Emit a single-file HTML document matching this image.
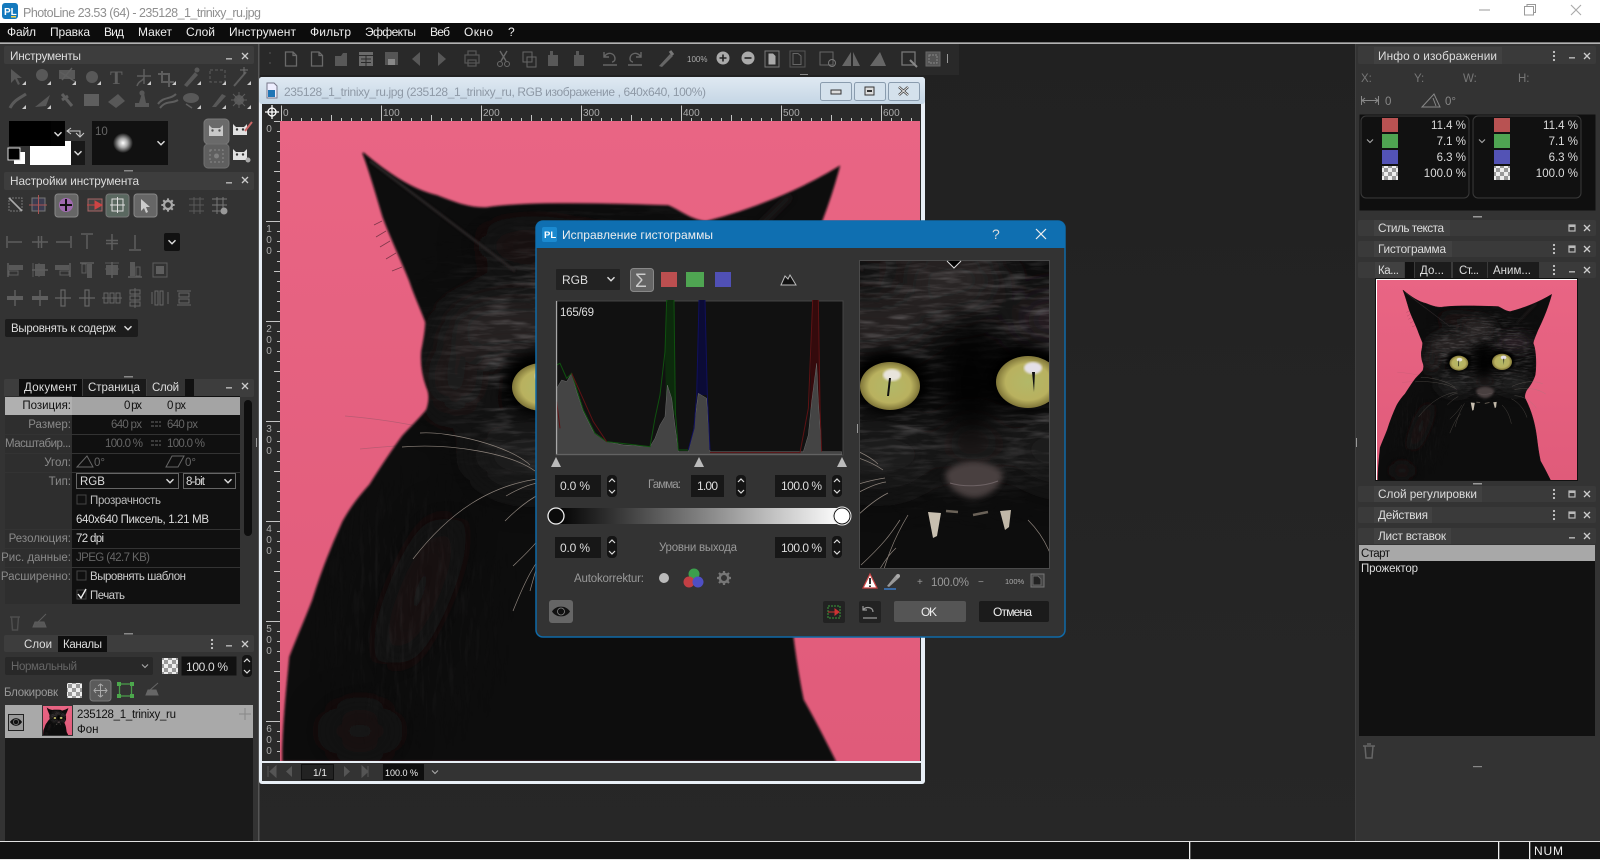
<!DOCTYPE html>
<html lang="ru"><head><meta charset="utf-8"><title>PhotoLine</title>
<style>
html,body{margin:0;padding:0;background:#282828;width:1600px;height:860px;overflow:hidden}
svg{display:block}
text{font-family:"Liberation Sans","Noto Sans CJK SC",sans-serif;font-size:11.5px;fill:#ddd}
.m text{font-size:12px;fill:#eee}
.h{font-size:11.800px;fill:#ddd}
.l{fill:#8a8a8a;text-anchor:end}
.d{fill:#666}
.k{fill:#111}
.g{fill:#999}
.i{fill:none;stroke:#5e5e5e;stroke-width:1.5}
.f{fill:#585858}
</style></head><body>
<svg xmlns="http://www.w3.org/2000/svg" width="1600" height="860" viewBox="0 0 1600 860">
<defs>
<pattern id="chk" width="8" height="8" patternUnits="userSpaceOnUse"><rect width="8" height="8" fill="#eee"/><rect width="4" height="4" fill="#999"/><rect x="4" y="4" width="4" height="4" fill="#999"/></pattern>
<linearGradient id="bg" x1="0" y1="0" x2="0" y2="1"><stop offset="0" stop-color="#212121"/><stop offset="1" stop-color="#272727"/></linearGradient>
<linearGradient id="win" x1="0" y1="0" x2="0" y2="1"><stop offset="0" stop-color="#dfe9f2"/><stop offset="1" stop-color="#c5d6e5"/></linearGradient>
<linearGradient id="gr"><stop offset="0" stop-color="#000"/><stop offset="1" stop-color="#fff"/></linearGradient>
<radialGradient id="eye"><stop offset="0" stop-color="#b2b868"/><stop offset=".7" stop-color="#b9b15f"/><stop offset="1" stop-color="#7f7538"/></radialGradient>
<radialGradient id="br"><stop offset="0" stop-color="#fff"/><stop offset=".45" stop-color="#aaa"/><stop offset="1" stop-color="#111"/></radialGradient>
<linearGradient id="pk" x1="0" y1="0" x2="0" y2="1"><stop offset="0" stop-color="#e96584"/><stop offset="1" stop-color="#e05b7a"/></linearGradient>
<filter id="b3" x="-30%" y="-30%" width="160%" height="160%"><feGaussianBlur stdDeviation="3"/></filter>
<filter id="b6" x="-40%" y="-40%" width="180%" height="180%"><feGaussianBlur stdDeviation="6"/></filter>
<filter id="b10" x="-60%" y="-60%" width="220%" height="220%"><feGaussianBlur stdDeviation="18"/></filter>
<filter id="b30" x="-40%" y="-40%" width="180%" height="180%"><feGaussianBlur stdDeviation="30"/></filter>
<filter id="b1" x="-5%" y="-5%" width="110%" height="110%"><feGaussianBlur stdDeviation="1"/></filter>
<filter id="fur" x="0" y="0" width="100%" height="100%"><feTurbulence type="fractalNoise" baseFrequency=".03 .2" numOctaves="3" seed="4"/><feColorMatrix type="matrix" values="0 0 0 0 .33  0 0 0 0 .31  0 0 0 0 .32  1.500 0 0 0 -.66"/></filter>
<filter id="fur2" x="0" y="0" width="100%" height="100%"><feTurbulence type="fractalNoise" baseFrequency=".2 .03" numOctaves="3" seed="9"/><feColorMatrix type="matrix" values="0 0 0 0 .28  0 0 0 0 .26  0 0 0 0 .27  1.500 0 0 0 -.66"/></filter>
<mask id="headm" maskUnits="userSpaceOnUse" x="0" y="0" width="640" height="640"><ellipse cx="340" cy="235" rx="175" ry="120" fill="#fff" filter="url(#b30)"/><ellipse cx="343" cy="275" rx="30" ry="75" fill="#000" filter="url(#b10)"/></mask>
<mask id="botm" maskUnits="userSpaceOnUse" x="0" y="0" width="640" height="640"><ellipse cx="130" cy="490" rx="70" ry="110" fill="#555" filter="url(#b30)"/></mask>
<clipPath id="sil"><path d="M83 32C110 55 135 70 157 75C175 82 190 88 207 87C240 82 300 82 388 85C400 90 412 100 426 101C470 90 520 70 559 46C550 80 535 120 515 160C505 185 500 195 500 203C510 225 510 280 506 304C500 325 485 345 479 352C472 365 472 375 474 379C490 410 505 450 512 510C515 535 518 555 523 579C535 600 545 620 555 640H3V629C4 590 8 560 10 536C18 515 25 500 33 479C42 450 52 425 63 401C72 385 80 375 90 364C102 345 112 330 123 315C132 305 140 298 147 289C150 280 150 272 147 266C143 255 141 242 142 230C144 220 146 210 146 201C140 185 135 175 130 160C120 135 110 115 103 95C97 75 90 50 83 32Z"/></clipPath>
<g id="cat">
<rect width="640" height="640" fill="url(#pk)"/>
<path d="M65 295C100 298 125 302 150 308M80 328C100 326 115 325 130 324" stroke="#b85a72" stroke-width=".8" fill="none"/>
<path d="M83 32C110 55 135 70 157 75C175 82 190 88 207 87C240 82 300 82 388 85C400 90 412 100 426 101C470 90 520 70 559 46C550 80 535 120 515 160C505 185 500 195 500 203C510 225 510 280 506 304C500 325 485 345 479 352C472 365 472 375 474 379C490 410 505 450 512 510C515 535 518 555 523 579C535 600 545 620 555 640H3V629C4 590 8 560 10 536C18 515 25 500 33 479C42 450 52 425 63 401C72 385 80 375 90 364C102 345 112 330 123 315C132 305 140 298 147 289C150 280 150 272 147 266C143 255 141 242 142 230C144 220 146 210 146 201C140 185 135 175 130 160C120 135 110 115 103 95C97 75 90 50 83 32Z" fill="#090707" stroke="#100c0c" stroke-width="1.500" filter="url(#b1)"/>
<path d="M102 100L94 104M106 110L96 116M110 120L100 126M116 132L106 138M122 146L112 150" stroke="#3a1a26" stroke-width=".8" opacity=".6"/>
<g clip-path="url(#sil)">
<g filter="url(#b10)">
<ellipse cx="325" cy="160" rx="50" ry="38" fill="#2b2627"/>
<ellipse cx="235" cy="205" rx="70" ry="28" fill="#2b2627"/>
<ellipse cx="440" cy="200" rx="60" ry="26" fill="#292425"/>
<ellipse cx="250" cy="335" rx="60" ry="35" fill="#1f1b1c"/>
<ellipse cx="440" cy="330" rx="60" ry="35" fill="#1f1b1c"/>
<ellipse cx="345" cy="322" rx="26" ry="26" fill="#2a2526"/>
<ellipse cx="175" cy="258" rx="28" ry="38" fill="#221e1f"/>
<ellipse cx="255" cy="125" rx="60" ry="18" fill="#1c1819"/>
<ellipse cx="140" cy="470" rx="20" ry="80" fill="#1c1819" transform="rotate(22 140 470)"/>
<ellipse cx="80" cy="610" rx="35" ry="24" fill="#1c1819"/>
</g>
<rect width="640" height="640" filter="url(#fur)" mask="url(#headm)" opacity=".6"/>
<rect width="640" height="640" filter="url(#fur2)" mask="url(#botm)" opacity=".45"/>
<path d="M90 40L235 150" stroke="#2a2526" stroke-width="2.500" filter="url(#b1)"/>
<path d="M510 75L445 140" stroke="#221d1e" stroke-width="5" filter="url(#b3)"/>
<ellipse cx="342" cy="262" rx="24" ry="62" fill="#020101" filter="url(#b10)"/>
<ellipse cx="262" cy="262" rx="40" ry="32" fill="#000" filter="url(#b6)"/>
<ellipse cx="400" cy="258" rx="42" ry="34" fill="#000" filter="url(#b6)"/>
</g>
<ellipse cx="262" cy="266" rx="30" ry="24" fill="url(#eye)"/>
<ellipse cx="400" cy="262" rx="32" ry="26" fill="url(#eye)"/>
<ellipse cx="264" cy="255" rx="9" ry="6" fill="#e8e4dc" filter="url(#b1)"/>
<ellipse cx="405" cy="248" rx="9" ry="6" fill="#e4e0e8" filter="url(#b1)"/>
<path d="M261 258L263 258 261 276 259 276Z" fill="#111"/>
<path d="M404 252L407 252 406 272Z" fill="#111"/>
<path d="M318 352C330 338 362 338 374 352 378 362 362 378 346 378 330 378 314 362 318 352Z" fill="#4a3f41" filter="url(#b3)"/>
<path d="M322 363C335 367 355 367 370 361" stroke="#6d6264" stroke-width="1" fill="none"/>
<path d="M300 392L313 393 309 416 305 418Z" fill="#c9c0b0"/>
<path d="M372 391L383 390 381 407 377 410Z" fill="#c1b8a8"/>
<path d="M318 391L330 392M345 395L360 392" stroke="#6a6258" stroke-width="2.500"/>
<g stroke="#8f857d" stroke-width=".7" fill="none">
<path d="M140 312C170 310 230 325 250 344M122 326C170 322 230 332 255 350M133 438C170 390 210 365 257 358M226 375C240 367 250 363 258 362M225 400C240 385 250 378 260 373M233 490C245 460 255 440 268 428"/>
<path d="M432 340C470 325 500 320 530 332M440 350C480 345 510 345 540 365M440 370C470 372 490 385 510 410M430 380C450 390 470 410 480 440"/>
<path d="M233 445C260 420 265 410 272 400M250 470C258 440 265 420 280 395M400 400C420 420 425 440 430 460"/>
</g>
</g>
<g id="dn"><path d="M-3.500 -1.800L0 1.800 3.500 -1.800" fill="none" stroke="#ddd" stroke-width="1.400"/></g>
<g id="dnw"><path d="M-3 -1.500L0 1.500 3 -1.500" fill="none" stroke="#aaa" stroke-width="1.100"/></g>
<g id="mi"><rect x="-3" y="0" width="6" height="1.600" fill="#aaa"/></g>
<g id="cl"><path d="M-3 -3L3 3M3 -3L-3 3" stroke="#ccc" stroke-width="1.300"/></g>
<g id="mx"><rect x="-3" y="-3" width="6" height="6" fill="none" stroke="#bbb" stroke-width="1.200"/><rect x="-3" y="-3" width="6" height="2" fill="#bbb"/></g>
<g id="dots"><circle cy="-4" r="1.100" fill="#ccc"/><circle r="1.100" fill="#ccc"/><circle cy="4" r="1.100" fill="#ccc"/></g>
<g id="tri"><path d="M0 4L4 0V4Z" fill="#c9c9c9"/></g>
<g id="spin"><rect x="-5" y="-11" width="10" height="22" rx="4" fill="#141414"/><path d="M-3 -4L0 -7 3 -4M-3 4L0 7 3 4" fill="none" stroke="#ddd" stroke-width="1.200"/></g>
<g id="gear"><circle r="4.200" fill="none" stroke="#777" stroke-width="2.400"/><path d="M0 -7V-4M0 4V7M-7 0H-4M4 0H7M-5 -5L-3 -3M3 3L5 5M5 -5L3 -3M-3 3L-5 5" stroke="#777" stroke-width="2.200"/></g>
<g id="a1"><path d="M-8 -6V6M-7 0H7" class="i"/></g>
<g id="a2"><path d="M-8 0H8M-1.500 -6V6M1.500 -6V6" class="i"/></g>
<g id="a3"><path d="M8 -6V6M-7 0H7" class="i"/></g>
<g id="b1i"><path d="M-7 -7V7" class="i"/><rect x="-6" y="-5" width="14" height="5" class="f"/><rect x="-6" y="1" width="9" height="4" fill="none" stroke="#5e5e5e"/></g>
<g id="b2i"><path d="M-7 -7V7M-1 -7V7" class="i" opacity=".6"/><rect x="-5" y="-6" width="10" height="12" class="f"/><path d="M-8 0H8" class="i"/></g>
<g id="c1i"><path d="M0 -8V8" class="i"/><rect x="-8" y="-2" width="16" height="4" fill="#5e5e5e"/></g>
<g id="c2i"><path d="M-8 0H8" class="i"/><rect x="-2" y="-8" width="4" height="16" fill="none" stroke="#666" stroke-width="1.200"/></g>
<g id="doc"><path d="M-5.500 -7H2L5.500 -3.500V7H-5.500ZM2 -7V-3.500H5.500" fill="none" stroke="#6a6a6a" stroke-width="1.300"/></g>
<g id="catf"><path d="M-7 -6L-4 -3H4L7 -6V5H-7Z"/></g>
</defs>

<!-- base -->
<rect width="1600" height="860" fill="#333"/>
<rect x="259" y="44" width="1097" height="797" fill="url(#bg)"/>
<rect x="259" y="44" width="700" height="31" fill="#292929"/>
<rect x="258" y="44" width="1.500" height="797" fill="#555"/>
<rect x="1355" y="44" width="1" height="797" fill="#3e3e3e"/>

<!-- title bar -->
<rect width="1600" height="23" fill="#fff"/>
<rect x="2" y="3" width="16" height="16" rx="3" fill="#1479bd"/>
<text x="4" y="15" style="font-size:10px;font-weight:bold;fill:#fff">PL</text>
<rect x="11" y="16" width="5" height="1.500" fill="#f3d34a"/>
<text x="23" y="17" textLength="238" style="font-size:12.500px;fill:#8f8f8f">PhotoLine 23.53 (64) - 235128_1_trinixy_ru.jpg</text>
<path d="M1479 10H1490" stroke="#999" stroke-width="1"/>
<path d="M1524.500 6.500h9v8.500h-9zM1527 6.500V4.500h8.500v8h-2" fill="none" stroke="#999"/>
<path d="M1571 5L1581 15M1581 5L1571 15" stroke="#aaa" stroke-width="1.100"/>

<!-- menu -->
<rect y="23" width="1600" height="20" fill="#0c0c0c"/>
<rect y="42.500" width="1600" height="1.200" fill="#e8e8e8"/>
<g class="m">
<text x="7" y="36" textLength="29">Файл</text><text x="50" y="36" textLength="40">Правка</text><text x="104" y="36" textLength="20">Вид</text><text x="138" y="36" textLength="34">Макет</text><text x="186" y="36" textLength="29">Слой</text><text x="229" y="36" textLength="67">Инструмент</text><text x="310" y="36" textLength="41">Фильтр</text><text x="365" y="36" textLength="51">Эффекты</text><text x="430" y="36" textLength="20">Веб</text><text x="464" y="36" textLength="29">Окно</text><text x="508" y="36">?</text>
</g>

<!-- Left: Tools -->
<rect x="4" y="46" width="250" height="18" rx="2" fill="#3d3d3d"/>
<text x="10" y="60" class="h" textLength="71">Инструменты</text>
<use href="#mi" x="229" y="58"/><use href="#cl" x="245" y="56"/>
<g>
<path d="M11 69V83L15 79 18 85 20 84 17 78 22 78Z" class="f"/>
<circle cx="42" cy="75" r="6" class="f"/>
<path d="M59 70H75V79H59Z" class="f"/><path d="M60 72L76 82M62 80L72 68" class="i"/>
<circle cx="92" cy="77" r="6" class="f"/>
<text x="110" y="84" style="font-family:'Liberation Serif',serif;font-size:19px;font-weight:bold;fill:#5e5e5e">T</text>
<path d="M144 69V84M137 76H151M137 86C139 80 142 82 144 78" class="i"/>
<path d="M162 71V82H174M158 74H169V87" class="i" style="stroke-width:2"/>
<path d="M184 85L195 72 198 75 187 87Z" class="f"/><circle cx="197" cy="70" r="2.500" class="f"/>
<rect x="210" y="70" width="15" height="12" fill="none" stroke="#5e5e5e" stroke-dasharray="3 2"/>
<path d="M234 86L246 72" stroke="#5e5e5e" stroke-width="2"/><path d="M244 67V74M240 70H248" stroke="#707070"/>
<use href="#tri" x="22" y="81"/><use href="#tri" x="47" y="81"/><use href="#tri" x="72" y="81"/><use href="#tri" x="97" y="81"/><use href="#tri" x="147" y="81"/><use href="#tri" x="172" y="81"/><use href="#tri" x="197" y="81"/><use href="#tri" x="222" y="81"/><use href="#tri" x="247" y="81"/>
<path d="M10 108C14 100 20 98 26 94" stroke="#5a5a5a" stroke-width="3" fill="none"/>
<path d="M35 107L50 95 46 106Z" class="f"/>
<path d="M62 94L72 106M62 100L68 96" stroke="#5e5e5e" stroke-width="3"/>
<rect x="84" y="94" width="15" height="12" fill="#5e5e5e"/>
<path d="M108 102L118 94 125 101 116 108Z" class="f"/>
<path d="M135 107H149V103H135ZM139 103L142 93H144L146 103" class="f"/><circle cx="142" cy="93" r="2.600" class="f"/>
<path d="M158 104C164 96 170 100 176 94M160 108C166 100 172 104 178 100" class="i" style="stroke-width:2"/>
<ellipse cx="191" cy="98" rx="8" ry="5" class="f"/><path d="M186 104L192 108" class="i"/>
<path d="M212 107L222 94 226 96 216 107Z" class="f"/>
<circle cx="239" cy="100" r="5" class="f"/><path d="M239 92V108M231 100H247M233 94L245 106M245 94L233 106" class="i" style="stroke-width:1"/>
<use href="#tri" x="22" y="105"/><use href="#tri" x="47" y="105"/><use href="#tri" x="197" y="105"/><use href="#tri" x="222" y="105"/><use href="#tri" x="247" y="105"/>
</g>
<!-- colours -->
<rect x="30" y="141" width="55" height="24" fill="#181818"/>
<rect x="30" y="141" width="41" height="24" fill="#fff"/>
<rect x="9" y="121" width="56" height="25" fill="#030303"/>
<rect x="9" y="121" width="42" height="25" fill="#000"/>
<use href="#dn" x="58" y="134"/><use href="#dn" x="78" y="153"/>
<path d="M67 131H80V137M76 133L80 137 84 133M71 128L67 131 71 134" fill="none" stroke="#ccc" stroke-width="1"/>
<rect x="14" y="152" width="11" height="12" fill="#fff"/><rect x="8" y="148" width="12" height="12" fill="#000" stroke="#ddd"/>
<rect x="92" y="121" width="76" height="44" fill="#111"/>
<text x="95" y="135" class="d">10</text>
<circle cx="123" cy="143" r="10" fill="url(#br)"/>
<use href="#dn" x="161" y="143"/>
<rect x="204" y="119" width="25" height="25" rx="4" fill="#6a6a6a" stroke="#7a7a7a"/>
<rect x="204" y="144" width="25" height="24" rx="4" fill="#5f5f5f" stroke="#707070"/>
<use href="#catf" x="216" y="131" fill="#c8c8c8"/><circle cx="212.500" cy="130.500" r="1.200" fill="#555"/><circle cx="219.500" cy="130.500" r="1.200" fill="#555"/>
<rect x="210" y="150" width="13" height="12" fill="none" stroke="#888" stroke-dasharray="2 2"/><circle cx="216.500" cy="156" r="2.500" fill="#808080"/>
<use href="#catf" x="240" y="130" fill="#e0e0e0"/><circle cx="237" cy="129.500" r="1.200" fill="#333"/><circle cx="243" cy="129.500" r="1.200" fill="#333"/><path d="M245 131L252 122" stroke="#c66" stroke-width="2"/>
<use href="#catf" x="240" y="155" fill="#e0e0e0"/><circle cx="237" cy="154.500" r="1.200" fill="#333"/><circle cx="243" cy="154.500" r="1.200" fill="#333"/><circle cx="248" cy="160" r="2.500" fill="#aaa"/>
<rect x="124" y="170" width="9" height="1.500" fill="#888"/>

<!-- Tool settings -->
<rect x="4" y="172" width="250" height="18" rx="2" fill="#3d3d3d"/>
<text x="10" y="185" class="h" textLength="129">Настройки инструмента</text>
<use href="#mi" x="229" y="182"/><use href="#cl" x="245" y="180"/>
<rect x="9" y="198" width="13" height="13" fill="none" stroke="#777" stroke-dasharray="2 1"/><path d="M9 198L22 211" stroke="#aaa" stroke-width="1.600"/>
<rect x="32" y="198" width="13" height="13" fill="#3c3c50" stroke="#777"/><path d="M38.500 195V214M29 205H47" stroke="#a55" stroke-width="1"/>
<rect x="55" y="194" width="23" height="23" rx="3" fill="#666" stroke="#888"/><circle cx="66" cy="205" r="7" fill="#a06ab0"/><path d="M66 199V211M60 205H72" stroke="#111" stroke-width="2"/>
<rect x="88" y="199" width="14" height="12" fill="#444" stroke="#a66"/><path d="M87 205H99M95 201L102 205 95 209Z" fill="#c44" stroke="#c44"/>
<rect x="106" y="194" width="23" height="23" rx="3" fill="#5a6860" stroke="#777"/><rect x="112" y="199" width="11" height="12" fill="none" stroke="#ddd"/><path d="M117.500 197V213M110 205H125" stroke="#ddd"/>
<rect x="134" y="194" width="23" height="23" rx="3" fill="#666" stroke="#888"/><path d="M141 199V211L144 208 146 213 148 212 146 207 150 207Z" fill="#ccc"/>
<g transform="translate(168 205) scale(.95)"><circle r="4.200" fill="none" stroke="#a8a8a8" stroke-width="2.400"/><path d="M0 -7V-4M0 4V7M-7 0H-4M4 0H7M-5 -5L-3 -3M3 3L5 5M5 -5L3 -3M-3 3L-5 5" stroke="#a8a8a8" stroke-width="2.200"/></g>
<path d="M189 199H204M189 205H204M189 211H204M194 197V214M200 197V214" stroke="#5a5a5a"/>
<path d="M212 199H227M212 205H227M212 211H227M217 197V214M223 197V214" stroke="#777"/><circle cx="224" cy="211" r="3.500" fill="#999"/>
<use href="#a1" x="15" y="242"/><use href="#a2" x="40" y="242"/><use href="#a3" x="63" y="242"/>
<use href="#a1" transform="translate(87 242) rotate(90)"/><use href="#a2" transform="translate(112 242) rotate(90)"/><use href="#a3" transform="translate(135 242) rotate(90)"/>
<rect x="164" y="233" width="16" height="18" rx="2" fill="#111"/><use href="#dn" x="172" y="242"/>
<use href="#b1i" x="15" y="270"/><use href="#b2i" x="40" y="270"/><use href="#b1i" transform="translate(63 270) scale(-1 1)"/><use href="#b1i" transform="translate(87 270) rotate(90)"/><use href="#b2i" transform="translate(112 270) rotate(90)"/><use href="#b1i" transform="translate(135 270) rotate(-90)"/>
<rect x="153" y="263" width="14" height="14" fill="none" stroke="#5e5e5e"/><rect x="156" y="266" width="8" height="8" fill="#5e5e5e"/>
<use href="#c1i" x="15" y="298"/><use href="#c1i" x="40" y="298"/><use href="#c2i" x="63" y="298"/><use href="#c2i" x="87" y="298"/>
<path d="M104 293h4v10h-4zM110 293h4v10h-4zM116 293h4v10h-4zM102 298h20" fill="none" stroke="#666"/>
<path d="M130 290h10v4h-10zM130 296h10v4h-10zM130 302h10v4h-10zM135 288v20" fill="none" stroke="#666"/>
<path d="M152 292v12M168 292v12M155 291h3v14h-3zM160 291h3v14h-3z" fill="none" stroke="#666"/>
<path d="M177 291h14M177 305h14M179 293h10v4h-10zM179 299h10v4h-10z" fill="none" stroke="#666"/>
<rect x="5" y="319" width="133" height="18" rx="2" fill="#1c1c1c"/>
<text x="11" y="332" textLength="105">Выровнять к содерж</text>
<use href="#dn" x="128" y="328"/>

<!-- Properties -->
<rect x="124" y="376" width="9" height="1.500" fill="#888"/>
<rect x="4" y="379" width="250" height="18" rx="2" fill="#3d3d3d"/>
<rect x="19" y="379" width="63" height="17" fill="#0e0e0e"/><rect x="83" y="379" width="63" height="17" fill="#1a1a1a"/><rect x="147" y="379" width="38" height="17" fill="#333"/><rect x="185" y="379" width="9" height="17" fill="#111"/>
<text x="24" y="391" textLength="53">Документ</text><text x="88" y="391" textLength="52">Страница</text><text x="152" y="391" textLength="27">Слой</text>
<use href="#mi" x="229" y="387"/><use href="#cl" x="245" y="386"/>
<rect x="5" y="396" width="235" height="208" fill="#101010"/>
<rect x="5" y="396" width="67" height="208" fill="#2e2e2e"/>
<rect x="5" y="397" width="67" height="18" fill="#b0b0b0"/><rect x="72" y="397" width="168" height="18" fill="#a4a4a4"/>
<path d="M5 434.500H240M5 453.500H240M5 472.500H240M5 529.500H240M5 548.500H240M5 567.500H240" stroke="#333"/>
<text x="71" y="409" class="k" style="text-anchor:end">Позиция:</text>
<text x="124" y="409" class="k" textLength="18">0 px</text><text x="167" y="409" class="k" textLength="19">0 px</text>
<text x="71" y="428" class="l">Размер:</text><text x="111" y="428" class="d" textLength="31">640 px</text><text x="167" y="428" class="d" textLength="31">640 px</text>
<path d="M151 422H161M151 426H161" stroke="#666" stroke-dasharray="3 1"/>
<text x="5" y="447" class="g" style="fill:#8a8a8a" textLength="66">Масштабир...</text><text x="105" y="447" class="d" textLength="38">100.0 %</text><text x="167" y="447" class="d" textLength="38">100.0 %</text>
<path d="M151 441H161M151 445H161" stroke="#666" stroke-dasharray="3 1"/>
<text x="71" y="466" class="l">Угол:</text><path d="M77 467L87 456 93 467Z" fill="none" stroke="#666"/><text x="94" y="466" class="d">0°</text><path d="M166 467L172 456H184L178 467Z" fill="none" stroke="#666"/><text x="185" y="466" class="d">0°</text>
<text x="71" y="485" class="l">Тип:</text>
<rect x="76.500" y="473.500" width="102" height="15" fill="#111" stroke="#666"/><text x="80" y="485">RGB</text><use href="#dn" x="170" y="481"/>
<rect x="183.500" y="473.500" width="52" height="15" fill="#111" stroke="#666"/><text x="186" y="485" textLength="19">8-bit</text><use href="#dn" x="228" y="481"/>
<rect x="77" y="495" width="9" height="9" fill="none" stroke="#444"/><text x="90" y="504" style="fill:#bbb" textLength="71">Прозрачность</text>
<text x="76" y="523" textLength="133">640x640 Пиксель, 1.21 MB</text>
<text x="71" y="542" class="l">Резолюция:</text><text x="76" y="542" textLength="28">72 dpi</text>
<text x="71" y="561" class="l">Рис. данные:</text><text x="76" y="561" class="d" textLength="74">JPEG (42.7 KB)</text>
<text x="71" y="580" class="l">Расширенно:</text><rect x="77" y="571" width="9" height="9" fill="none" stroke="#444"/><text x="90" y="580" style="fill:#ccc" textLength="96">Выровнять шаблон</text>
<rect x="77" y="590" width="9" height="9" fill="none" stroke="#444"/><path d="M78 594L81 598 86 589" stroke="#eee" stroke-width="1.400" fill="none"/><text x="90" y="599" style="fill:#ccc" textLength="35">Печать</text>
<rect x="244" y="400" width="8" height="136" rx="4" fill="#0e0e0e"/>
<rect x="256" y="438" width="1" height="9" fill="#999"/>
<path d="M10 617H20M11.500 617L12.500 630H17.500L18.500 617" fill="none" stroke="#4e4e4e" stroke-width="1.500"/>
<path d="M33 627H46L44 622H35ZM38 622L46 614" class="f" stroke="#5c5c5c"/>
<rect x="124" y="633" width="9" height="1.500" fill="#888"/>

<!-- Layers -->
<rect x="4" y="635" width="250" height="17" rx="2" fill="#3d3d3d"/>
<rect x="58" y="636" width="49" height="16" fill="#0e0e0e"/>
<text x="24" y="648" textLength="28">Слои</text><text x="63" y="648" textLength="39">Каналы</text>
<use href="#dots" x="212" y="644"/><use href="#mi" x="229" y="645"/><use href="#cl" x="245" y="644"/>
<rect x="5" y="657" width="148" height="18" rx="2" fill="#282828"/>
<text x="11" y="670" class="d" textLength="66">Нормальный</text><use href="#dnw" x="145" y="666"/>
<rect x="162" y="658" width="16" height="16" fill="url(#chk)"/>
<rect x="181" y="656" width="56" height="20" fill="#111" stroke="#333"/><text x="186" y="671" textLength="42" style="font-size:12px">100.0 %</text>
<use href="#spin" x="247" y="666"/>
<text x="4" y="696" class="g" textLength="54">Блокировк</text>
<rect x="67" y="683" width="15" height="15" fill="url(#chk)"/>
<rect x="90" y="680" width="21" height="21" rx="3" fill="#5b5b5b" stroke="#7a7a7a"/><path d="M100.500 684V697M94 690.500H107M98 686L100.500 684 103 686M98 695L100.500 697 103 695M96 688L94 690.500 96 693M105 688L107 690.500 105 693" fill="none" stroke="#aaa"/>
<rect x="119.500" y="684" width="12" height="12" fill="none" stroke="#4a9a4a" stroke-width="1.300"/>
<rect x="117" y="682" width="4" height="4" fill="#4ca84c"/><rect x="130" y="682" width="4" height="4" fill="#4ca84c"/><rect x="117" y="694" width="4" height="4" fill="#4ca84c"/><rect x="130" y="694" width="4" height="4" fill="#4ca84c"/>
<path d="M146 695H158L156 690H148ZM150 690L158 683" fill="#666" stroke="#666"/>
<rect x="5" y="705" width="248" height="33" fill="#a9a9a9"/>
<rect x="5" y="738" width="248" height="103" fill="#1a1a1a"/>
<rect x="8.500" y="714.500" width="15" height="16" fill="#9a9a9a" stroke="#222"/>
<path d="M10 722C13 717 19 717 22 722 19 727 13 727 10 722Z" fill="#111"/><circle cx="16" cy="722" r="2.600" fill="#111" stroke="#888" stroke-width=".7"/>
<rect x="42" y="705" width="31" height="31" fill="#333"/>
<svg x="43" y="706" width="29" height="29" viewBox="0 0 640 640"><use href="#cat"/></svg>
<text x="77" y="718" class="k" textLength="99">235128_1_trinixy_ru</text>
<text x="77" y="733" class="k">Фон</text>
<path d="M245 708V720M239 714H251" stroke="#888"/>

<!-- toolbar -->
<g>
<path d="M270 52V54M270 62V64" stroke="#555"/>
<use href="#doc" x="291" y="59"/><use href="#doc" x="317" y="59"/>
<path d="M335 66V56H341L343 53H347V66Z" class="f"/>
<rect x="359" y="52" width="14" height="14" fill="#6a6a6a"/><path d="M359 55.500H373M361 59H371M361 62.500H371M366 56V66" stroke="#2a2a2a"/>
<rect x="385" y="52" width="13" height="13" fill="#555"/><rect x="388" y="59" width="7" height="6" fill="#888"/>
<path d="M420 52L412 59 420 66Z" class="f"/><path d="M438 52L446 59 438 66Z" class="f"/>
<path d="M465 55H479V63H465ZM468 55V51H476V55M468 60H476V66H468Z" fill="none" stroke="#555" stroke-width="1.300"/>
<path d="M500 51L506 61M507 51L501 61" stroke="#6a6a6a" stroke-width="1.400"/><circle cx="500" cy="64" r="2.500" fill="none" stroke="#6a6a6a"/><circle cx="507" cy="64" r="2.500" fill="none" stroke="#6a6a6a"/>
<rect x="523" y="52" width="9" height="10" fill="none" stroke="#666"/><rect x="527" y="57" width="9" height="10" fill="none" stroke="#666"/>
<path d="M548 55H558V66H548Z" class="f"/><rect x="550" y="51" width="3" height="4" class="f"/>
<path d="M574 55H584V66H574Z" class="f"/><rect x="576" y="51" width="3" height="4" class="f"/>
<path d="M604 57C608 51 615 53 615 59 615 61 613 62 612 62M604 52V57H609M603 65H617" fill="none" stroke="#666" stroke-width="1.400"/>
<path d="M641 57C637 51 630 53 630 59 630 61 632 62 633 62M641 52V57H636M628 65H642" fill="none" stroke="#666" stroke-width="1.400"/>
<path d="M659 66L670 54 673 56 662 67Z" fill="#666"/><path d="M670 51L673 55" stroke="#777" stroke-width="3"/>
<text x="687" y="62" style="font-size:8px;fill:#aaa">100%</text>
<circle cx="723" cy="58" r="6.500" fill="#aaa"/><path d="M723 54.500V61.500M719.500 58H726.500" stroke="#222" stroke-width="1.600"/>
<circle cx="748" cy="58" r="6.500" fill="#aaa"/><path d="M744.500 58H751.500" stroke="#222" stroke-width="1.600"/>
<rect x="765" y="51" width="14" height="16" fill="none" stroke="#777"/><path d="M768.500 53.500H773L775.500 56V64.500H768.500Z" fill="#aaa"/>
<rect x="790" y="51" width="15" height="16" fill="none" stroke="#555"/><path d="M793 53.500H798L801 56V64.500H793Z" fill="none" stroke="#666"/>
<rect x="820" y="52" width="13" height="13" fill="none" stroke="#666"/><circle cx="832" cy="63" r="3.500" fill="none" stroke="#777"/>
<path d="M842 66L851 52V66ZM853 52L860 66H853Z" fill="#666"/>
<path d="M870 66L880 52 886 66ZM876 66L880 58 883 66" fill="#666"/>
<rect x="902" y="52" width="13" height="13" fill="none" stroke="#777" stroke-width="1.300"/><path d="M910 60L917 67" stroke="#888" stroke-width="2"/>
<rect x="926" y="52" width="14" height="14" fill="#555" stroke="#666"/><path d="M929 55H937V63H929Z" fill="none" stroke="#888" stroke-dasharray="2 1"/>
<rect x="947" y="54" width="1" height="9" fill="#999"/>
<rect x="800" y="74" width="8" height="1" fill="#888"/>
</g>

<!-- document window -->
<rect x="259" y="77" width="666" height="707" rx="3" fill="#e8eff6"/>
<rect x="259" y="77" width="666" height="27" rx="3" fill="url(#win)"/>
<path d="M267 83H274L277 86V98H267Z" fill="#eef" stroke="#778"/><rect x="268" y="90" width="7" height="7" fill="#1f75b5"/>
<text x="284" y="96" textLength="422" style="fill:#8e99a6;font-size:12px">235128_1_trinixy_ru.jpg (235128_1_trinixy_ru, RGB изображение , 640x640, 100%)</text>
<g fill="#d4e1ec" stroke="#8a9cae"><rect x="820.500" y="82.500" width="31" height="18" rx="2"/><rect x="854.500" y="82.500" width="31" height="18" rx="2"/><rect x="888.500" y="82.500" width="31" height="18" rx="2"/></g>
<rect x="831" y="90" width="10" height="4" fill="#ddd" stroke="#333" stroke-width="1"/>
<rect x="865" y="87" width="9" height="8" fill="#ddd" stroke="#333"/><rect x="867" y="90" width="5" height="2" fill="#333"/>
<path d="M899 87L908 95M908 87L899 95" stroke="#333" stroke-width="2.400"/><path d="M899 87L908 95M908 87L899 95" stroke="#eee" stroke-width=".9"/>
<rect x="262" y="104" width="659" height="657" fill="#2a2a2a"/>
<svg x="280" y="121" width="640" height="640" viewBox="0 0 640 640"><use href="#cat"/></svg>
<!-- rulers -->
<g stroke="#c4c4c4" fill="none">
<path d="M281 119.500H920" stroke-width="3" stroke-dasharray="1 9"/>
<path d="M281 118H920" stroke-width="6" stroke-dasharray="1 49"/>
<path d="M281 113H920" stroke-width="15" stroke-dasharray="1 99"/>
<path d="M278.500 121V761" stroke-width="3" stroke-dasharray="1 9"/>
<path d="M277 121V761" stroke-width="6" stroke-dasharray="1 49"/>
<path d="M273 221V761" stroke-width="14" stroke-dasharray="1 99"/>
</g>
<g>
<text x="283" y="116" style="font-size:10px;fill:#aaa">0</text><text x="383" y="116" style="font-size:10px;fill:#aaa">100</text><text x="483" y="116" style="font-size:10px;fill:#aaa">200</text><text x="583" y="116" style="font-size:10px;fill:#aaa">300</text><text x="683" y="116" style="font-size:10px;fill:#aaa">400</text><text x="783" y="116" style="font-size:10px;fill:#aaa">500</text><text x="883" y="116" style="font-size:10px;fill:#aaa">600</text>
</g>
<g>
<text x="269" y="132" style="font-size:10px;fill:#aaa" text-anchor="middle">0</text>
<text x="269" y="232" style="font-size:10px;fill:#aaa" text-anchor="middle">1</text><text x="269" y="243" style="font-size:10px;fill:#aaa" text-anchor="middle">0</text><text x="269" y="254" style="font-size:10px;fill:#aaa" text-anchor="middle">0</text>
<text x="269" y="332" style="font-size:10px;fill:#aaa" text-anchor="middle">2</text><text x="269" y="343" style="font-size:10px;fill:#aaa" text-anchor="middle">0</text><text x="269" y="354" style="font-size:10px;fill:#aaa" text-anchor="middle">0</text>
<text x="269" y="432" style="font-size:10px;fill:#aaa" text-anchor="middle">3</text><text x="269" y="443" style="font-size:10px;fill:#aaa" text-anchor="middle">0</text><text x="269" y="454" style="font-size:10px;fill:#aaa" text-anchor="middle">0</text>
<text x="269" y="532" style="font-size:10px;fill:#aaa" text-anchor="middle">4</text><text x="269" y="543" style="font-size:10px;fill:#aaa" text-anchor="middle">0</text><text x="269" y="554" style="font-size:10px;fill:#aaa" text-anchor="middle">0</text>
<text x="269" y="632" style="font-size:10px;fill:#aaa" text-anchor="middle">5</text><text x="269" y="643" style="font-size:10px;fill:#aaa" text-anchor="middle">0</text><text x="269" y="654" style="font-size:10px;fill:#aaa" text-anchor="middle">0</text>
<text x="269" y="732" style="font-size:10px;fill:#aaa" text-anchor="middle">6</text><text x="269" y="743" style="font-size:10px;fill:#aaa" text-anchor="middle">0</text><text x="269" y="754" style="font-size:10px;fill:#aaa" text-anchor="middle">0</text>
</g>
<circle cx="272" cy="112" r="4" fill="none" stroke="#fff" stroke-width="1.300"/><path d="M272 105V119M265 112H279" stroke="#fff" stroke-width="1.300"/>
<!-- doc status strip -->
<rect x="262" y="763" width="659" height="18" fill="#333"/>
<path d="M268 766V777M276 766L270 771.500 276 777Z" fill="#555" stroke="#555"/>
<path d="M292 766L286 771.500 292 777Z" fill="#555"/>
<rect x="301.500" y="764.500" width="32" height="15" fill="#222" stroke="#111"/><text x="313" y="776" style="font-size:10px;fill:#eee">1/1</text>
<path d="M344 766L350 771.500 344 777Z" fill="#555"/><path d="M362 766L368 771.500 362 777ZM368 766V777" fill="#555" stroke="#555"/>
<rect x="383" y="764" width="41" height="16" fill="#0e0e0e"/><text x="385" y="776" style="font-size:9px;fill:#eee">100.0 %</text>
<use href="#dnw" x="435" y="772"/>

<!-- Right panels -->
<rect x="1358" y="46" width="238" height="18" rx="2" fill="#3a3a3a"/><rect x="1374" y="47" width="128" height="17" fill="#414141"/>
<text x="1378" y="60" class="h" textLength="119">Инфо о изображении</text>
<use href="#dots" x="1554" y="56"/><use href="#mi" x="1572" y="57"/><use href="#cl" x="1587" y="56"/>
<text x="1361" y="82" style="fill:#777">X:</text><text x="1414" y="82" style="fill:#777">Y:</text><text x="1463" y="82" style="fill:#777">W:</text><text x="1518" y="82" style="fill:#777">H:</text>
<path d="M1361.500 96V105M1378.500 96V105M1362 100.500H1378M1365 98L1362 100.500 1365 103M1375 98L1378 100.500 1375 103" fill="none" stroke="#888"/>
<text x="1385" y="105" style="fill:#888">0</text>
<path d="M1422 107L1434 94 1440 107Z" fill="none" stroke="#888"/><path d="M1433 98L1436 106" stroke="#888"/><text x="1445" y="105" style="fill:#888">0°</text>
<rect x="1359" y="114" width="237" height="97" fill="#0f0f0f" stroke="#333"/>
<rect x="1361" y="116" width="108" height="82" rx="5" fill="#111" stroke="#3a3a3a"/><rect x="1473" y="116" width="108" height="82" rx="5" fill="#111" stroke="#3a3a3a"/>
<use href="#dnw" x="1370" y="141"/><use href="#dnw" x="1482" y="141"/>
<rect x="1382" y="118" width="16" height="14" fill="#b85252"/><rect x="1382" y="134" width="16" height="14" fill="#4fa552"/><rect x="1382" y="150" width="16" height="14" fill="#5353b5"/><rect x="1382" y="166" width="16" height="14" fill="url(#chk)"/>
<rect x="1494" y="118" width="16" height="14" fill="#b85252"/><rect x="1494" y="134" width="16" height="14" fill="#4fa552"/><rect x="1494" y="150" width="16" height="14" fill="#5353b5"/><rect x="1494" y="166" width="16" height="14" fill="url(#chk)"/>
<text x="1466" y="129" text-anchor="end">11.4 %</text><text x="1466" y="145" text-anchor="end">7.1 %</text><text x="1466" y="161" text-anchor="end">6.3 %</text><text x="1466" y="177" text-anchor="end">100.0 %</text>
<text x="1578" y="129" text-anchor="end">11.4 %</text><text x="1578" y="145" text-anchor="end">7.1 %</text><text x="1578" y="161" text-anchor="end">6.3 %</text><text x="1578" y="177" text-anchor="end">100.0 %</text>
<rect x="1473" y="216" width="9" height="1.500" fill="#999"/>
<rect x="1358" y="220" width="238" height="16" rx="2" fill="#3a3a3a"/><rect x="1374" y="220" width="76" height="16" fill="#414141"/>
<text x="1378" y="232" class="h" textLength="66">Стиль текста</text><use href="#mx" x="1572" y="228"/><use href="#cl" x="1587" y="228"/>
<rect x="1358" y="241" width="238" height="16" rx="2" fill="#3a3a3a"/><rect x="1374" y="241" width="78" height="16" fill="#414141"/>
<text x="1378" y="253" class="h" textLength="68">Гистограмма</text><use href="#dots" x="1554" y="249"/><use href="#mx" x="1572" y="249"/><use href="#cl" x="1587" y="249"/>
<rect x="1358" y="262" width="238" height="16" rx="2" fill="#3a3a3a"/>
<rect x="1375" y="262" width="29" height="16" fill="#414141"/><rect x="1405" y="262" width="9" height="16" fill="#111"/><rect x="1415" y="262" width="36" height="16" fill="#1c1c1c"/><rect x="1453" y="262" width="34" height="16" fill="#1c1c1c"/><rect x="1488" y="262" width="51" height="16" fill="#1c1c1c"/>
<text x="1378" y="274" textLength="21">Ка...</text><text x="1420" y="274" textLength="24">До...</text><text x="1459" y="274" textLength="20">Ст...</text><text x="1493" y="274" textLength="38">Аним...</text>
<use href="#dots" x="1554" y="270"/><use href="#mi" x="1572" y="271"/><use href="#cl" x="1587" y="270"/>
<rect x="1375.500" y="278.500" width="202" height="202" fill="#fff" stroke="#111"/>
<svg x="1377" y="280" width="200" height="200" viewBox="0 0 640 640"><use href="#cat"/></svg>
<rect x="1356" y="438" width="1" height="9" fill="#999"/>
<rect x="1473" y="483" width="9" height="1.500" fill="#999"/>
<rect x="1358" y="486" width="238" height="16" rx="2" fill="#3a3a3a"/><rect x="1374" y="486" width="108" height="16" fill="#414141"/>
<text x="1378" y="498" class="h" textLength="99">Слой регулировки</text><use href="#dots" x="1554" y="494"/><use href="#mx" x="1572" y="494"/><use href="#cl" x="1587" y="494"/>
<rect x="1358" y="507" width="238" height="16" rx="2" fill="#3a3a3a"/><rect x="1374" y="507" width="58" height="16" fill="#414141"/>
<text x="1378" y="519" class="h" textLength="50">Действия</text><use href="#dots" x="1554" y="515"/><use href="#mx" x="1572" y="515"/><use href="#cl" x="1587" y="515"/>
<rect x="1358" y="528" width="238" height="16" rx="2" fill="#3a3a3a"/><rect x="1374" y="528" width="77" height="16" fill="#414141"/>
<text x="1378" y="540" class="h" textLength="68">Лист вставок</text><use href="#mi" x="1572" y="537"/><use href="#cl" x="1587" y="536"/>
<rect x="1359" y="545" width="236" height="191" fill="#111"/>
<rect x="1359" y="545" width="236" height="16" fill="#a8a8a8"/>
<text x="1361" y="557" class="k" textLength="29">Старт</text>
<text x="1361" y="572" textLength="57">Прожектор</text>
<path d="M1363 746H1375M1365 746L1366 758H1372L1373 746M1367 744H1371" fill="none" stroke="#666" stroke-width="1.500"/>
<rect x="1473" y="766" width="9" height="1.200" fill="#888"/>

<!-- Dialog -->
<rect x="536" y="221" width="529" height="416" rx="7" fill="#333" stroke="#0f6aa8" stroke-width="1.500"/>
<path d="M536 248V228a7 7 0 0 1 7-7H1058a7 7 0 0 1 7 7V248Z" fill="#0f6fb1"/>
<rect x="542" y="227" width="15" height="15" rx="2" fill="#1b8ad0"/><text x="544" y="238" style="font-size:9.500px;font-weight:bold;fill:#fff">PL</text>
<text x="562" y="239" textLength="151" style="font-size:12px;fill:#eee">Исправление гистограммы</text>
<text x="992" y="239" style="font-size:14px;fill:#ddd">?</text>
<path d="M1036 229L1046 239M1046 229L1036 239" stroke="#eee" stroke-width="1.200"/>
<!-- controls -->
<rect x="556" y="269" width="64" height="21" rx="1" fill="#222"/><text x="562" y="284" style="font-size:12px">RGB</text><use href="#dn" x="611" y="279"/>
<rect x="630.500" y="268.500" width="23" height="23" rx="3" fill="#656565" stroke="#888"/><text x="635" y="287" style="font-size:19px;fill:#ccc">Σ</text>
<rect x="661" y="272" width="16" height="15" fill="#bc4f50"/><rect x="686" y="272" width="18" height="15" fill="#4fa552"/><rect x="715" y="272" width="16" height="15" fill="#5050b5"/>
<path d="M781 285L785 276 788 279 790 275 796 285Z" fill="#111" stroke="#bbb"/>
<!-- histogram -->
<rect x="556" y="301" width="287" height="154" fill="#111" stroke="#444"/>
<g transform="translate(550 295) scale(.33333)">
<path d="M345 170L352 15H372L378 350 350 420Z" fill="#0c2a0c"/>
<path d="M440 300L447 15H465L472 300Z" fill="#0b0b36"/>
<path d="M780 340L787 15H806L812 340Z" fill="#340a0c"/>
<path d="M20 478V280L35 255 50 260 65 235 80 290 100 350 130 410 170 440 220 450 300 455 315 430 330 390 345 365 352 270 365 310 372 370 385 470H415L430 410 445 295 470 310 480 470H760L775 420 785 320 800 205 805 320 815 470H875V478Z" fill="#444" stroke="#6a6a6a" stroke-width="1.500"/>
<path d="M20 210L30 205 50 250 65 235 100 345 135 415 170 440 300 455 315 370 330 300 345 170 350 15M372 15L376 350 385 465H415" fill="none" stroke="#0f520f" stroke-width="3"/>
<path d="M415 465L432 400 440 300 447 15M465 15L472 300 480 465" fill="none" stroke="#10105e" stroke-width="3"/>
<path d="M20 320L30 400M65 235L130 380 170 440M480 473H750L775 340 788 15M805 15L810 340 815 470" fill="none" stroke="#5e1214" stroke-width="3"/>
<path d="M20 18V478" stroke="#bbb" stroke-width="3"/>
<path d="M20 478H876" stroke="#666" stroke-width="3"/>
</g>
<text x="560" y="316" textLength="34">165/69</text>
<path d="M556 457L561 467H551ZM699 457L704 467H694ZM842 457L847 467H837Z" fill="#bbb"/>
<!-- input row -->
<rect x="555" y="475" width="46" height="22" fill="#171717"/><text x="560" y="490" textLength="30" style="font-size:12px">0.0 %</text><use href="#spin" x="612" y="486"/>
<text x="648" y="488" class="g" textLength="33">Гамма:</text>
<rect x="691" y="475" width="33" height="22" fill="#171717"/><text x="697" y="490" textLength="21" style="font-size:12px">1.00</text><use href="#spin" x="741" y="486"/>
<rect x="775" y="475" width="51" height="22" fill="#171717"/><text x="781" y="490" textLength="41" style="font-size:12px">100.0 %</text><use href="#spin" x="837" y="486"/>
<rect x="556" y="508" width="286" height="16" fill="url(#gr)"/>
<circle cx="556" cy="516" r="8" fill="#0a0a0a" stroke="#eee" stroke-width="1.300"/>
<circle cx="842" cy="516" r="8" fill="#fff" stroke="#111" stroke-width="1"/><circle cx="842" cy="516" r="9" fill="none" stroke="#eee" stroke-width="1"/>
<rect x="555" y="537" width="46" height="21" fill="#171717"/><text x="560" y="552" textLength="30" style="font-size:12px">0.0 %</text><use href="#spin" x="612" y="547"/>
<text x="659" y="551" class="g" textLength="78">Уровни выхода</text>
<rect x="775" y="537" width="51" height="21" fill="#171717"/><text x="781" y="552" textLength="41" style="font-size:12px">100.0 %</text><use href="#spin" x="837" y="547"/>
<text x="574" y="582" class="g" textLength="70">Autokorrektur:</text>
<circle cx="664" cy="578" r="5" fill="#bbb"/>
<circle cx="694" cy="574" r="5.500" fill="#3c9f4c"/><circle cx="689" cy="582" r="5.500" fill="#c23f44"/><circle cx="698" cy="582" r="5.500" fill="#4f4fc4"/>
<use href="#gear" x="724" y="578"/>
<rect x="549" y="600" width="24" height="23" rx="3" fill="#666"/><path d="M552 611.500C556 605 566 605 570 611.500 566 618 556 618 552 611.500Z" fill="#111"/><circle cx="561" cy="611.500" r="3.500" fill="#111" stroke="#888" stroke-width=".8"/>
<rect x="823" y="601" width="22" height="22" rx="2" fill="#222"/><rect x="828" y="606" width="12" height="12" fill="none" stroke="#3a9a3a" stroke-dasharray="2 1"/><path d="M828 612H838M835 609L839 612 835 615Z" fill="#c33" stroke="#c33"/>
<rect x="859" y="601" width="22" height="22" rx="2" fill="#222"/><path d="M873 612C873 607 866 606 863 610M863 606V610H867M863 618H877" fill="none" stroke="#999" stroke-width="1.200"/>
<rect x="894" y="601" width="72" height="21" rx="2" fill="#555"/><text x="921" y="616" textLength="16" style="font-size:12px;fill:#eee">OK</text>
<rect x="979" y="601" width="70" height="21" rx="2" fill="#1b1b1b"/><text x="993" y="616" textLength="39" style="font-size:12px;fill:#eee">Отмена</text>
<!-- preview -->
<rect x="859.500" y="260.500" width="190" height="308" fill="none" stroke="#4a4a4a"/>
<svg x="860" y="261" width="189" height="307" viewBox="232 141 189 307"><use href="#cat"/></svg>
<path d="M947 261L954 268 961 261" fill="#000" stroke="#ddd" stroke-width="1"/>
<rect x="857" y="424" width="1" height="9" fill="#999"/>
<path d="M870 574L877 588H863Z" fill="#fff" stroke="#c44" stroke-width="1.200"/><path d="M870 578V584M870 585.500V587" stroke="#000" stroke-width="1.600"/>
<path d="M887 586L896 575 899 578 889 587Z" fill="#999"/><path d="M884 589H896" stroke="#3a7bc8" stroke-width="1.500"/><circle cx="898" cy="576" r="2" fill="#aaa"/>
<text x="917" y="585" class="g" style="font-size:10px">+</text>
<text x="931" y="586" class="g" textLength="38">100.0%</text>
<text x="978" y="585" class="g" style="font-size:10px">−</text>
<text x="1005" y="584" style="font-size:7.500px;fill:#aaa">100%</text>
<rect x="1031" y="574" width="13" height="13" fill="#444" stroke="#777"/><path d="M1033 576H1038L1041 579V585H1033Z" fill="#222" stroke="#666"/>

<!-- status bar -->
<rect y="841" width="1600" height="1.300" fill="#e0e0e0"/>
<rect y="842" width="1600" height="17" fill="#111"/>
<rect y="859" width="1600" height="1" fill="#e8e8e8"/>
<rect x="1189" y="842" width="1.300" height="17" fill="#eee"/><rect x="1498" y="842" width="1.300" height="17" fill="#eee"/><rect x="1529" y="842" width="1.300" height="17" fill="#eee"/>
<text x="1534" y="855" textLength="29" style="font-size:12px;fill:#eee">NUM</text>
</svg>
</body></html>
